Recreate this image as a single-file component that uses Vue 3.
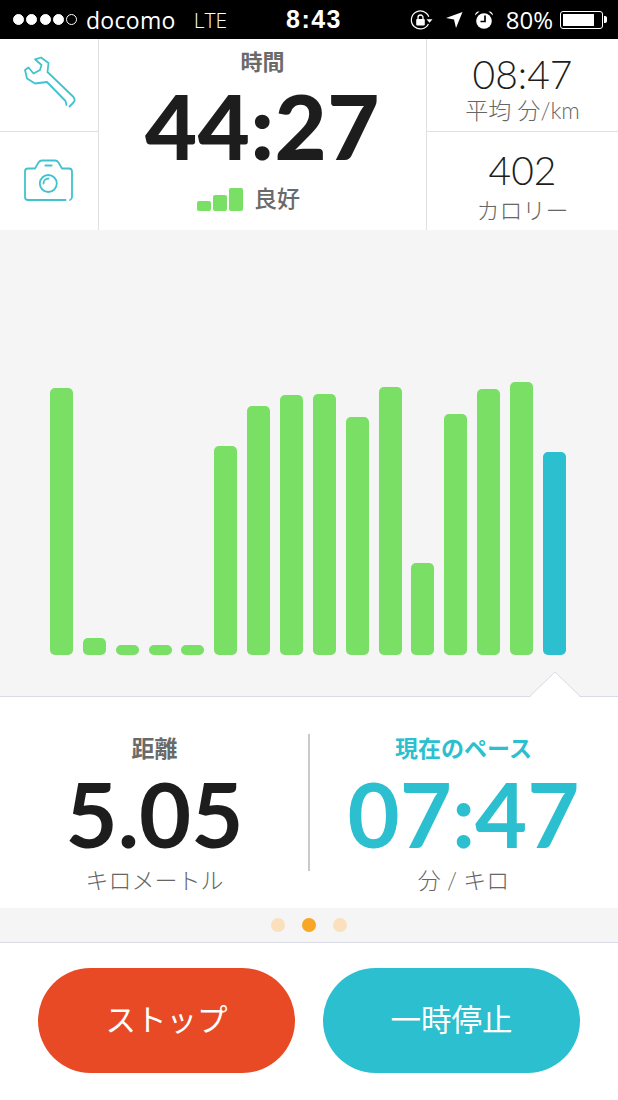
<template>
  <div class="screen">
    <div class="status">
      <div class="status-left">
        <span class="signal">
          <i v-for="n in 4" :key="n" class="dot"></i>
          <i class="dot empty"></i>
        </span>
        <span class="carrier">docomo</span>
        <span class="net">LTE</span>
      </div>
      <div class="clock">8:43</div>
      <div class="status-right">
        <svg class="s-lock" viewBox="0 0 24 22" width="24" height="22">
          <path d="M18.8 7.800A9 9 0 1 0 18.400 15" fill="none" stroke="#fff" stroke-width="1.200" />
          <path d="M16.500 10.200h6l-3 3.600z" fill="#fff" />
          <rect x="6.200" y="10" width="8.600" height="6.500" rx="1" fill="#fff" />
          <path d="M8 10.500V8.500a2.500 2.500 0 0 1 5 0v2" fill="none" stroke="#fff" stroke-width="1.300" />
        </svg>
        <svg class="s-loc" viewBox="0 0 18 18" width="18" height="18">
          <path d="M17.500 1 1 7l8 1.500L11 17z" fill="#fff" />
        </svg>
        <svg class="s-alarm" viewBox="0 0 20 20" width="20" height="20">
          <circle cx="10" cy="11" r="7.800" fill="#fff" />
          <path d="M11 5.500V11.500H6.500" fill="none" stroke="#000" stroke-width="1.700" />
          <path d="M1 5.500C1 3 3 1 5.500 1.500zM19 5.500C19 3 17 1 14.500 1.500z" fill="#fff" />
        </svg>
        <span class="pct">80%</span>
        <span class="battery"><b></b></span>
        <span class="nub"></span>
      </div>
    </div>

    <div class="top">
      <div class="tools">
        <div class="tool">
          <svg class="wrench" viewBox="0 0 70 65" width="70" height="65" fill="none" stroke="#41c3cf" stroke-width="1.800" stroke-linejoin="round" stroke-linecap="round">
            <path d="M54.500 56.500 58.500 52.500C59.800 51 60 49 58.500 47L32.500 22 33.500 13 26 7.500 20 9.300 26.500 15 25 20 18.500 23.500 13.500 17.500 10 20 12 28.500 20 33.500 32 32 50.500 51 51.500 55" />
          </svg>
        </div>
        <div class="tool">
          <svg class="camera" viewBox="0 0 70 60" width="70" height="60" fill="none" stroke="#41c3cf" stroke-width="1.800" stroke-linecap="round" stroke-linejoin="round">
            <path d="M50.500 50H13C11 50 10 49 10 47V21.500C10 19.500 11 18.500 13 18.500H20L23.500 12.500C24.500 11 25.500 10.500 27 10.500H40C41.500 10.500 42.500 11 43.500 12.500L47 18.500H54C56 18.500 57 19.500 57 21.500V47C57 48.500 56.500 49.500 55 50" />
            <circle cx="33.300" cy="33.500" r="8.500" />
            <path d="M28.500 33.500A5 5 0 0 1 33.500 28.500" />
            <path d="M30.500 15.500H36.500" stroke-width="2.200" />
          </svg>
        </div>
      </div>
      <div class="time">
        <div class="time-label">時間</div>
        <div class="time-value">44:27</div>
        <div class="quality">
          <span class="q-bars">
            <i v-for="h in qualityBars" :key="h" :style="{ height: h + 'px' }"></i>
          </span>
          <span class="q-text">良好</span>
        </div>
      </div>
      <div class="side">
        <div class="side-cell">
          <div class="side-value">08:47</div>
          <div class="side-label">平均 分/km</div>
        </div>
        <div class="side-cell">
          <div class="side-value">402</div>
          <div class="side-label">カロリー</div>
        </div>
      </div>
    </div>

    <div class="chart">
      <div
        v-for="(h, i) in bars"
        :key="i"
        class="bar"
        :class="{ current: i === bars.length - 1 }"
        :style="{ height: h + 'px' }"
      ></div>
    </div>

    <div class="stats">
      <svg class="notch" viewBox="0 0 52 26" width="52" height="26">
        <path d="M1 26 26 1 51 26z" fill="#fff" />
        <path d="M1 25 26 1 51 25" fill="none" stroke="#d9dbe6" stroke-width="1" />
      </svg>
      <div class="stat">
        <div class="stat-label">距離</div>
        <div class="stat-value">5.05</div>
        <div class="stat-unit">キロメートル</div>
      </div>
      <div class="stat now">
        <div class="stat-label">現在のペース</div>
        <div class="stat-value">07:47</div>
        <div class="stat-unit">分 / キロ</div>
      </div>
    </div>

    <div class="pager">
      <i></i>
      <i class="on"></i>
      <i></i>
    </div>

    <div class="actions">
      <button class="stop">ストップ</button>
      <button class="pause">一時停止</button>
    </div>
  </div>
</template>

<script setup>
const qualityBars = [10, 16, 23]
const bars = [267, 17, 10, 10, 10, 209, 249, 260, 261, 238, 268, 92, 241, 266, 273, 203]
</script>

<style>
html,
body {
  background: #fff;
}
</style>

<style scoped>
.screen {
  width: 618px;
  height: 1100px;
  display: flex;
  flex-direction: column;
  overflow: hidden;
  background: #fff;
  font-family: "Lato", "Noto Sans CJK JP", sans-serif;
  color: #1d1d1d;
}

.status {
  height: 39px;
  flex: none;
  background: #000;
  color: #fff;
  display: flex;
  align-items: center;
  padding: 0 11px 0 13px;
  font-family: "Open Sans", sans-serif;
}
.status-left,
.status-right {
  flex: 1;
  display: flex;
  align-items: center;
}
.status-right {
  justify-content: flex-end;
}
.signal {
  display: flex;
  gap: 2.250px;
  margin-right: 9px;
}
.dot {
  width: 11px;
  height: 11px;
  border-radius: 50%;
  background: #fff;
  border: 1px solid #fff;
  box-sizing: border-box;
}
.dot.empty {
  background: transparent;
}
.carrier {
  font-size: 23px;
  letter-spacing: 0.3px;
  margin-right: 18px;
}
.net {
  font-size: 21px;
  font-weight: 300;
  color: #fff;
}
.clock {
  margin-left: 8px;
  font-family: "Liberation Sans", sans-serif;
  font-size: 25px;
  font-weight: 700;
  letter-spacing: 1.500px;
}
.s-lock {
  margin-right: 11px;
}
.s-loc {
  margin-right: 11px;
}
.s-alarm {
  margin-right: 12px;
}
.pct {
  font-size: 24px;
  margin-right: 7px;
}
.battery {
  width: 43px;
  height: 18px;
  border: 1px solid #fff;
  border-radius: 3px;
  box-sizing: border-box;
  padding: 2px;
  display: flex;
}
.battery b {
  width: 31px;
  background: #fff;
}
.nub {
  width: 3px;
  height: 7px;
  margin-left: 1px;
  background: #fff;
  border-radius: 0 2px 2px 0;
}

.top {
  height: 191px;
  flex: none;
  display: flex;
}
.tools {
  width: 99px;
  flex: none;
  display: flex;
  flex-direction: column;
  border-right: 1px solid #dfe0e4;
  box-sizing: border-box;
}
.tool {
  height: 93px;
  display: flex;
  align-items: center;
  justify-content: center;
  border-bottom: 1px solid #dfe0e4;
  box-sizing: border-box;
}
.tool + .tool {
  height: 98px;
  border-bottom: none;
}
.wrench {
  margin: 0 0 5px 2px;
}
.camera {
  margin: 0 0 2px 2px;
}
.time {
  width: 327px;
  flex: none;
  display: flex;
  flex-direction: column;
  align-items: center;
}
.time-label {
  margin-top: 8px;
  font-size: 22px;
  line-height: 30px;
  font-weight: 700;
  color: #6a6a6a;
}
.time-value {
  font-size: 90px;
  line-height: 90px;
  font-weight: 900;
  letter-spacing: 0.5px;
  margin-top: 3px;
}
.quality {
  display: flex;
  align-items: center;
  gap: 11px;
  margin: 13px 28px 0 0;
}
.q-bars {
  display: flex;
  align-items: flex-end;
  gap: 2px;
  margin-bottom: -3px;
}
.q-bars i {
  width: 14px;
  border-radius: 2px;
  background: #79df65;
}
.q-text {
  font-size: 23px;
  font-weight: 500;
  line-height: 30px;
  color: #6a6a6a;
}
.side {
  flex: 1;
  display: flex;
  flex-direction: column;
  border-left: 1px solid #dfe0e4;
}
.side-cell {
  height: 93px;
  display: flex;
  flex-direction: column;
  align-items: center;
  border-bottom: 1px solid #dfe0e4;
  box-sizing: border-box;
  padding-top: 15px;
}
.side-cell + .side-cell {
  height: 98px;
  border-bottom: none;
  padding-top: 18px;
}
.side-value {
  font-size: 39px;
  line-height: 40px;
  font-weight: 300;
}
.side-label {
  font-size: 23px;
  line-height: 30px;
  color: #666;
  font-weight: 300;
  margin-top: 1px;
}
.side-cell + .side-cell .side-label {
  margin-top: 5px;
}

.chart {
  height: 467px;
  flex: none;
  background: #f5f5f6;
  border-bottom: 1px solid #d9dbe6;
  box-sizing: border-box;
  display: flex;
  align-items: flex-end;
  gap: 9.870px;
  padding: 0 52px 41px 50px;
}
.bar {
  width: 23px;
  flex: none;
  border-radius: 5px;
  background: #79df65;
}
.bar.current {
  background: #2bbfcf;
}

.stats {
  height: 211px;
  flex: none;
  display: grid;
  grid-template-columns: 309px 309px;
  position: relative;
}
.notch {
  position: absolute;
  left: 529px;
  top: -26px;
}
.stat {
  display: flex;
  flex-direction: column;
  align-items: center;
  padding-top: 36px;
}
.stat.now {
  position: relative;
}
.stat.now::before {
  content: "";
  position: absolute;
  left: -1px;
  top: 37px;
  height: 137px;
  width: 2px;
  background: #c9c9c9;
}
.stat-label {
  font-size: 23px;
  line-height: 30px;
  font-weight: 700;
  color: #6a6a6a;
}
.stat-value {
  font-size: 90px;
  line-height: 90px;
  font-weight: 700;
  margin-top: 5px;
}
.stat-unit {
  font-size: 23px;
  line-height: 30px;
  color: #666;
  font-weight: 300;
  margin-top: 7px;
}
.now .stat-label,
.now .stat-value {
  color: #2bbfcf;
}

.pager {
  height: 35px;
  flex: none;
  background: #f5f5f6;
  border-bottom: 1px solid #d9dbe6;
  box-sizing: border-box;
  display: flex;
  align-items: center;
  justify-content: center;
  gap: 17px;
}
.pager i {
  width: 14px;
  height: 14px;
  border-radius: 50%;
  background: #fae0bd;
}
.pager i.on {
  background: #f7a625;
}

.actions {
  display: flex;
  gap: 28px;
  padding: 25px 38px 0;
}
.actions button {
  width: 257px;
  height: 105px;
  border: none;
  border-radius: 53px;
  padding: 0 0 6px;
  color: #fff;
  font-family: "Noto Sans CJK JP", sans-serif;
  font-size: 30.500px;
  font-weight: 400;
}
.stop {
  background: #e84a25;
}
.pause {
  background: #2bbfcf;
}
</style>
